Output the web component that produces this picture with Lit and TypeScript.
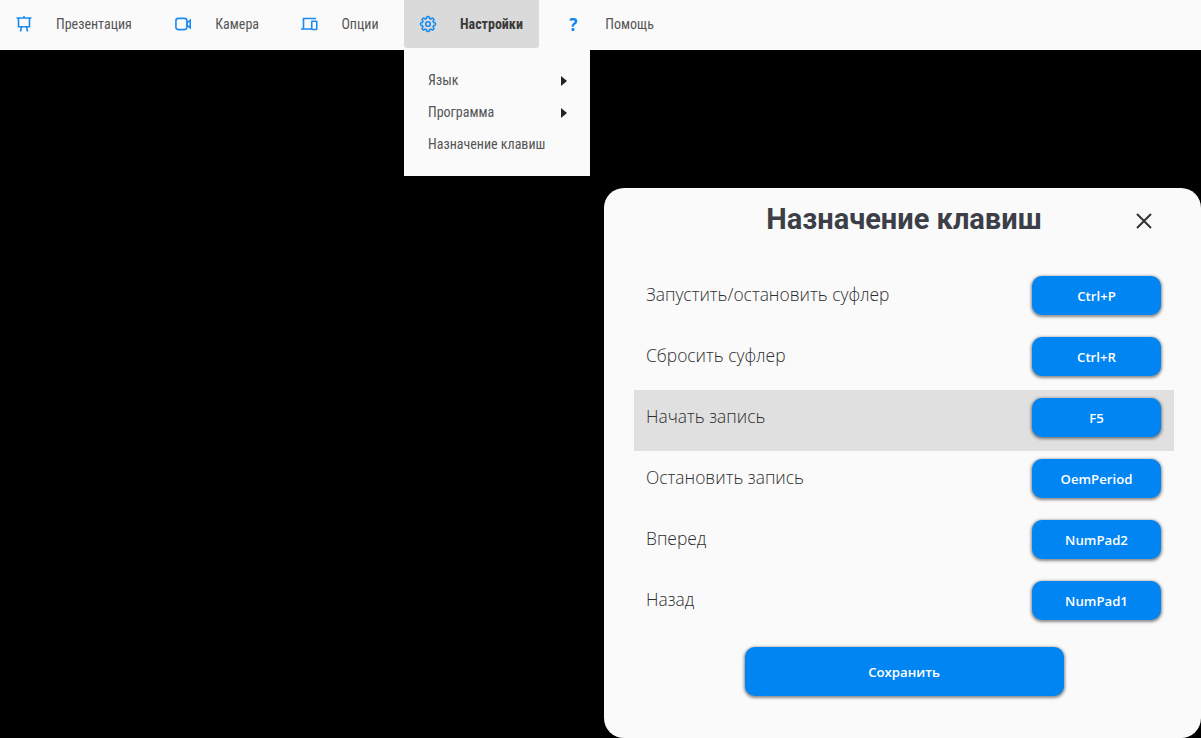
import { LitElement, html, css, svg } from "lit";
import { customElement } from "lit/decorators.js";

const icons = {
  easel: svg`<path d="M.5 2h15M2.500 2v8.750h11V2M8 0v2M5.500 10.750L4.500 15.500M10.500 10.750l1 4.750" />`,
  video: svg`<rect x=".9" y="2.400" width="11" height="11.200" rx="2.500"/><path d="M11.900 7l3.300-2.700v7.400L11.900 9z"/>`,
  devices: svg`<path d="M0 13h10M2.500 13V2.500H15"/><rect x="10.750" y="5.250" width="5" height="8.250" rx=".5"/>`,
  gear: svg`<circle cx="8" cy="8" r="2.300"/><path d="M6.700 1.100c.2-.7 2.400-.7 2.600 0l.3 1.400 1.300.5 1.200-.8c.6-.3 2.200 1.300 1.800 1.800l-.8 1.200.5 1.300 1.400.3c.7.2.7 2.300 0 2.500l-1.400.3-.5 1.300.8 1.200c.4.6-1.200 2.200-1.800 1.800l-1.200-.8-1.300.5-.3 1.400c-.2.700-2.400.7-2.600 0l-.3-1.400-1.300-.5-1.200.8c-.6.4-2.200-1.200-1.800-1.800l.8-1.200-.5-1.300-1.400-.3c-.7-.2-.7-2.300 0-2.500l1.400-.3.5-1.300-.8-1.200c-.4-.5 1.200-2.100 1.800-1.800l1.200.8 1.300-.5z"/>`,
};

const nav: [keyof typeof icons | null, string, boolean][] = [
  ["easel", "Презентация", false],
  ["video", "Камера", false],
  ["devices", "Опции", false],
  ["gear", "Настройки", true],
  [null, "Помощь", false],
];

const rows: [string, string, boolean][] = [
  ["Запустить/остановить суфлер", "Ctrl+P", false],
  ["Сбросить суфлер", "Ctrl+R", false],
  ["Начать запись", "F5", true],
  ["Остановить запись", "OemPeriod", false],
  ["Вперед", "NumPad2", false],
  ["Назад", "NumPad1", false],
];

@customElement("app-root")
export class AppRoot extends LitElement {
  static styles = css`
    :host { display: block; position: relative; height: 738px; background: #000; overflow: hidden; font-family: Roboto, sans-serif; }
    .nav { display: flex; gap: 10.400px; height: 50px; background: #fafafa; align-items: flex-start; }
    .item { display: flex; align-items: center; gap: 24px; height: 48px; padding: 0 16px; font-size: 14px; font-stretch: condensed; color: #555; }
    .item:first-child { padding-right: 17px; }
    .item:nth-child(3) { padding-right: 15px; }
    .item.on { background: #dadada; font-weight: 700; color: #3a3a3a; border-radius: 0 0 3px 3px; }
    .ic { width: 16px; height: 16px; fill: none; stroke: #1a8cf0; stroke-width: 1.600; flex: none; overflow: visible; }
    .q { width: 16px; text-align: center; color: #0a85f0; font: 700 17px "Noto Sans", sans-serif; }
    .menu { position: absolute; left: 404px; top: 50px; width: 186px; height: 126px; box-sizing: border-box; padding: 14px 23px 16px 24px; background: #fafafa; }
    .mi { display: flex; justify-content: space-between; align-items: center; height: 32px; font-size: 14px; font-stretch: condensed; color: #555; }
    .tri { width: 0; height: 0; border-left: 6px solid #222; border-top: 5px solid transparent; border-bottom: 5px solid transparent; position: relative; top: 1px; }
    .dialog { position: absolute; left: 604px; top: 188px; width: 597px; height: 550px; box-sizing: border-box; padding: 0 27px 0 30px; background: #fafafa; border-radius: 20px; display: flex; flex-direction: column; font-family: "Open Sans", "Noto Sans", sans-serif; }
    .head { position: relative; height: 80px; text-align: center; }
    h1 { margin: 0; padding-top: 12px; font-family: Roboto, sans-serif; font-size: 29px; line-height: 38px; font-weight: 700; color: #3c3f47; }
    .close { position: absolute; left: 501px; top: 24px; width: 18px; height: 18px; stroke: #333; stroke-width: 2; fill: none; }
    .row { display: flex; align-items: center; justify-content: space-between; height: 61px; box-sizing: border-box; padding: 0 13px 6px 12px; font-size: 17.400px; font-weight: 300; color: #2e2e2e; }
    .row.on { background: #e0e0e0; }
    .row span { position: relative; top: -1.500px; }
    button { border: none; padding: 0; background: #0085f2; color: #fff; font: 600 13.200px "Open Sans", "Noto Sans", sans-serif; border-radius: 10px; box-shadow: 0 1px 3px 1px rgba(0,0,0,.45); }
    .key { width: 129px; height: 39px; }
    .foot { display: flex; justify-content: center; margin-top: 13px; }
    .save { width: 319px; height: 49px; padding-top: 1px; }
  `;

  render() {
    return html`
      <div class="nav">
        ${nav.map(([ic, label, on]) => html`
          <div class="item ${on ? "on" : ""}">
            ${ic ? html`<svg class="ic" viewBox="0 0 16 16">${icons[ic]}</svg>` : html`<span class="q">?</span>`}
            <span>${label}</span>
          </div>`)}
      </div>
      <div class="menu">
        <div class="mi">Язык<i class="tri"></i></div>
        <div class="mi">Программа<i class="tri"></i></div>
        <div class="mi">Назначение клавиш</div>
      </div>
      <div class="dialog">
        <div class="head">
          <h1>Назначение клавиш</h1>
          <svg class="close" viewBox="0 0 18 18"><path d="M2 2l14 14M16 2L2 16"/></svg>
        </div>
        ${rows.map(([t, k, on]) => html`
          <div class="row ${on ? "on" : ""}"><span>${t}</span><button class="key">${k}</button></div>`)}
        <div class="foot"><button class="save">Сохранить</button></div>
      </div>
    `;
  }
}
